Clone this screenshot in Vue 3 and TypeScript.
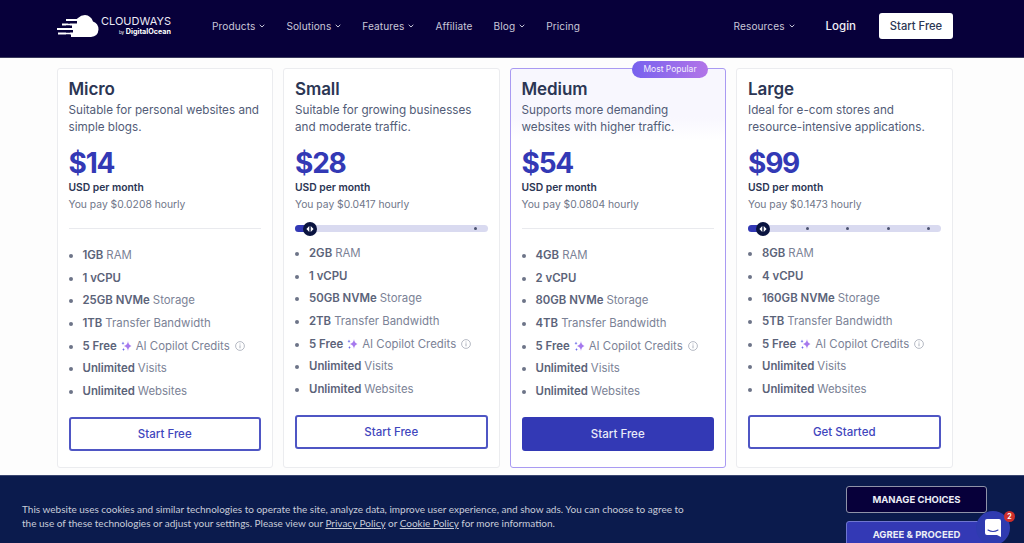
<script setup lang="ts">
interface Feature {
  bold: string
  text?: string
  copilot?: boolean
}

interface Plan {
  name: string
  desc: string[]
  price: string
  hourly: string
  cta: string
  featured?: boolean
  dots?: number[]
  features: Feature[]
}

function specs(ram: string, cpu: string, disk: string, bw: string): Feature[] {
  return [
    { bold: ram, text: 'RAM' },
    { bold: cpu },
    { bold: disk + ' NVMe', text: 'Storage' },
    { bold: bw, text: 'Transfer Bandwidth' },
    { bold: '5 Free', text: 'AI Copilot Credits', copilot: true },
    { bold: 'Unlimited', text: 'Visits' },
    { bold: 'Unlimited', text: 'Websites' }
  ]
}

const plans: Plan[] = [
  {
    name: 'Micro',
    desc: ['Suitable for personal websites and', 'simple blogs.'],
    price: '$14',
    hourly: 'You pay $0.0208 hourly',
    cta: 'Start Free',
    features: specs('1GB', '1 vCPU', '25GB', '1TB')
  },
  {
    name: 'Small',
    desc: ['Suitable for growing businesses', 'and moderate traffic.'],
    price: '$28',
    hourly: 'You pay $0.0417 hourly',
    cta: 'Start Free',
    dots: [93],
    features: specs('2GB', '1 vCPU', '50GB', '2TB')
  },
  {
    name: 'Medium',
    desc: ['Supports more demanding', 'websites with higher traffic.'],
    price: '$54',
    hourly: 'You pay $0.0804 hourly',
    cta: 'Start Free',
    featured: true,
    features: specs('4GB', '2 vCPU', '80GB', '4TB')
  },
  {
    name: 'Large',
    desc: ['Ideal for e-com stores and', 'resource-intensive applications.'],
    price: '$99',
    hourly: 'You pay $0.1473 hourly',
    cta: 'Get Started',
    dots: [30, 51, 72, 93],
    features: specs('8GB', '4 vCPU', '160GB', '5TB')
  }
]

const navLeft = [
  { label: 'Products', menu: true },
  { label: 'Solutions', menu: true },
  { label: 'Features', menu: true },
  { label: 'Affiliate', menu: false },
  { label: 'Blog', menu: true },
  { label: 'Pricing', menu: false }
]
</script>

<template>
  <div class="page">
    <header class="topbar">
      <div class="logo">
        <svg class="logo-mark" width="42" height="22" viewBox="0 0 42 22">
          <path fill="#fff" d="M14 22 Q12 21 13 19 L13 6 Q19 5 21 3 Q24 0 28 0 Q34 .5 36 6.500 Q41.500 8.500 41.500 14.500 Q41 21.500 34 22 Z" />
          <path fill="#fff" d="M9 4h11v2H9zM5 8.500h14v2H5zM0 13h14v2H0zM1 17.500h15v2H1z" />
          <path fill="#07003a" d="M11 6h9v2.500h-9zM9 10.500h6V13H9zM9 15h7v2.500H9zM9 19.500h5V22H9z" />
        </svg>
        <div class="logo-text">
          <span class="logo-name">CLOUDWAYS</span>
          <span class="logo-by"><small>by</small> DigitalOcean</span>
        </div>
      </div>
      <nav class="nav">
        <a v-for="item in navLeft" :key="item.label" class="nav-link">
          {{ item.label }}
          <svg v-if="item.menu" width="6" height="4" viewBox="0 0 6 4"><path d="M.7.8 3 3 5.300.8" fill="none" stroke="currentColor" stroke-width="1" /></svg>
        </a>
      </nav>
      <div class="top-right">
        <a class="nav-link">
          Resources
          <svg width="6" height="4" viewBox="0 0 6 4"><path d="M.7.8 3 3 5.300.8" fill="none" stroke="currentColor" stroke-width="1" /></svg>
        </a>
        <a class="login">Login</a>
        <a class="top-cta">Start Free</a>
      </div>
    </header>

    <main class="plans">
      <section v-for="plan in plans" :key="plan.name" class="card" :class="{ featured: plan.featured }">
        <span v-if="plan.featured" class="badge">Most Popular</span>
        <h2 class="plan-name">{{ plan.name }}</h2>
        <p class="plan-desc">
          <span v-for="line in plan.desc" :key="line">{{ line }}</span>
        </p>
        <div class="price">{{ plan.price }}</div>
        <div class="per">USD per month</div>
        <div class="hourly">{{ plan.hourly }}</div>

        <div v-if="plan.dots" class="slider">
          <span class="slider-fill"></span>
          <span class="slider-thumb">
            <svg width="8" height="6" viewBox="0 0 8 6"><path fill="#fff" d="M3.300 0v6L.4 3zM4.700 0v6l2.900-3z" /></svg>
          </span>
          <i v-for="d in plan.dots" :key="d" class="slider-dot" :style="{ left: d + '%' }"></i>
        </div>
        <hr v-else class="divider" />

        <ul class="features">
          <li v-for="f in plan.features" :key="f.bold + f.text">
            <b>{{ f.bold }}</b>
            <svg v-if="f.copilot" class="spark" width="11" height="12" viewBox="0 0 11 12">
              <path fill="#a679ee" d="M7 1 Q7.300 5 10.500 6 Q7.300 7 7 11 Q6.700 7 3 6 Q6.700 5 7 1Z" />
              <path fill="#6d6ee8" d="M2 1.500 Q2.200 3 3.500 3.300 Q2.200 3.600 2 5 Q1.800 3.600.5 3.300 Q1.800 3 2 1.500ZM2.500 8 Q2.700 9.300 3.800 9.500 Q2.700 9.800 2.500 11 Q2.300 9.800 1.200 9.500 Q2.300 9.300 2.500 8Z" />
            </svg>
            <span v-if="f.text">{{ f.text }}</span>
            <svg v-if="f.copilot" class="info" width="10" height="10" viewBox="0 0 10 10">
              <circle cx="5" cy="5" r="4.400" fill="none" stroke="#a3a8b5" stroke-width=".8" />
              <path d="M5 4.300v3M5 2.500v1" stroke="#a3a8b5" stroke-width=".9" />
            </svg>
          </li>
        </ul>

        <button class="cta" type="button">{{ plan.cta }}</button>
      </section>
    </main>

    <footer class="cookies">
      <p class="cookie-text">
        <span>This website uses cookies and similar technologies to operate the site, analyze data, improve user experience, and show ads. You can choose to agree to</span>
        <span>the use of these technologies or adjust your settings. Please view our <u>Privacy Policy</u> or <u>Cookie Policy</u> for more information.</span>
      </p>
      <div class="cookie-actions">
        <button class="manage" type="button">MANAGE CHOICES</button>
        <button class="agree" type="button">AGREE &amp; PROCEED</button>
      </div>
    </footer>

    <div class="chat">
      <svg width="16" height="18" viewBox="0 0 16 18">
        <path fill="#fff" d="M2 0h12a2 2 0 0 1 2 2v16l-4-2H2a2 2 0 0 1-2-2V2a2 2 0 0 1 2-2Z" />
        <path d="M3 11q5 3 10 0" fill="none" stroke="#2f3bb0" stroke-width="1.100" stroke-linecap="round" />
      </svg>
      <span class="chat-count">2</span>
    </div>
  </div>
</template>

<style scoped>
.page {
  position: relative;
  width: 1024px;
  height: 543px;
  overflow: hidden;
  background: #fdfdfd;
  font-family: Inter, "Noto Sans", sans-serif;
  color: #2b3654;
}

.topbar {
  display: flex;
  align-items: center;
  height: 58px;
  padding: 0 71px 5px 57px;
  box-sizing: border-box;
  border-bottom: 1px solid #3a3a5c;
  background: #07003a;
}

.logo {
  display: flex;
  align-items: center;
  gap: 2px;
  width: 155px;
  color: #fff;
}

.logo-text {
  display: flex;
  flex-direction: column;
  align-items: flex-end;
}

.logo-name {
  font-size: 11px;
  line-height: 12px;
  color: #eceaf5;
}

.logo-by {
  font-size: 7.200px;
  line-height: 9px;
  font-weight: 700;
}

.logo-by small {
  font-size: 4.500px;
  font-weight: 400;
}

.nav {
  display: flex;
  gap: 21px;
}

.nav-link {
  display: flex;
  align-items: center;
  gap: 4px;
  font-size: 10.100px;
  letter-spacing: .1px;
  color: #c9c7d8;
}

.top-right {
  display: flex;
  align-items: center;
  margin-left: auto;
}

.login {
  margin-left: 31px;
  font-size: 11.500px;
  font-weight: 500;
  color: #f1f0f7;
}

.top-cta {
  display: flex;
  align-items: center;
  justify-content: center;
  width: 74px;
  height: 26px;
  margin-left: 23px;
  border-radius: 3px;
  background: #fff;
  font-size: 11.200px;
  font-weight: 500;
  color: #2b3654;
}

.plans {
  display: grid;
  grid-template-columns: repeat(4, 1fr);
  gap: 10px;
  height: 417px;
  padding: 10px 71.500px 7px 56.500px;
  box-sizing: border-box;
}

.card {
  position: relative;
  display: flex;
  flex-direction: column;
  padding: 11px 11px 12px;
  border: 1px solid #ebecef;
  border-radius: 3px;
  background: #fff;
}

.card.featured {
  border-color: #a99af2;
  background: linear-gradient(#f8f7fe 0, #f8f7fe 48px, #fff 72px);
}

.badge {
  position: absolute;
  top: -8px;
  right: 17px;
  width: 76px;
  height: 17px;
  border-radius: 9px;
  background: linear-gradient(90deg, #7762ee, #b275e8);
  font-size: 8.500px;
  line-height: 17px;
  text-align: center;
  color: #f3effd;
}

.plan-name {
  margin: 0;
  font-size: 17px;
  line-height: 18px;
  font-weight: 600;
  letter-spacing: -.1px;
  color: #2b3654;
}

.plan-desc {
  display: flex;
  flex-direction: column;
  margin: 4px 0 0;
  font-size: 11.700px;
  line-height: 17px;
  white-space: nowrap;
  color: #525c77;
}

.price {
  margin-top: 11px;
  font-size: 28px;
  line-height: 32px;
  font-weight: 700;
  letter-spacing: -1.200px;
  color: #3339b5;
}

.per {
  font-size: 10.300px;
  line-height: 16px;
  font-weight: 600;
  color: #2b3654;
}

.hourly {
  margin-top: 1px;
  font-size: 10.300px;
  line-height: 16px;
  color: #6f7689;
}

.divider {
  width: 100%;
  height: 1px;
  margin: 16px 0 17px;
  border: 0;
  background: #e9eaee;
}

.slider {
  position: relative;
  height: 7px;
  margin: 13px 0 12px;
  border-radius: 4px;
  background: #d9daf0;
}

.slider-fill {
  position: absolute;
  top: 0;
  left: 0;
  width: 14px;
  height: 7px;
  border-radius: 4px;
  background: #3339b5;
}

.slider-thumb {
  position: absolute;
  top: -3.500px;
  left: 8px;
  display: flex;
  align-items: center;
  justify-content: center;
  width: 14px;
  height: 14px;
  border-radius: 50%;
  background: #0a1440;
}

.slider-dot {
  position: absolute;
  top: 2px;
  width: 3px;
  height: 3px;
  border-radius: 50%;
  background: #4b5270;
}

.features {
  display: flex;
  flex-direction: column;
  gap: 4.670px;
  margin: 0;
  padding: 0 0 0 14px;
  list-style: disc;
  font-size: 11.400px;
  line-height: 18px;
  color: #7b8296;
}

.features li::marker {
  color: #6d7488;
}

.features li {
  white-space: nowrap;
}

.features b {
  font-weight: 600;
  color: #5b6379;
}

.spark {
  margin: 0 4px 0 4px;
  vertical-align: -2px;
}

.info {
  margin-left: 5px;
  vertical-align: -1px;
}

.features b + span {
  margin-left: 3px;
}

.cta {
  height: 34px;
  margin-top: 17px;
  border: 2px solid #4f56c4;
  border-radius: 3px;
  background: #fff;
  font-family: inherit;
  font-size: 11.500px;
  font-weight: 500;
  color: #3f46bd;
}

.featured .cta {
  border-color: #3339b5;
  background: #3339b5;
  color: #e9eaf8;
}

.cookies {
  display: flex;
  justify-content: space-between;
  height: 68px;
  padding: 10px 37px 0 22px;
  box-sizing: border-box;
  border-top: 1px solid #3a4670;
  background: #0b1b4d;
  overflow: hidden;
}

.cookie-text {
  display: flex;
  flex-direction: column;
  margin: 16px 0 0;
  font-family: Lato, sans-serif;
  font-size: 10px;
  line-height: 14px;
  white-space: nowrap;
  color: #c8ccd9;
}

.cookie-actions {
  display: flex;
  flex-direction: column;
  gap: 8px;
}

.manage,
.agree {
  flex: none;
  width: 141px;
  height: 27px;
  border-radius: 3px;
  font-family: inherit;
  font-size: 9.500px;
  font-weight: 700;
  color: #eceef6;
}

.manage {
  border: 1px solid #8f93a8;
  background: #07003a;
}

.agree {
  border: 1px solid #6f76d0;
  background: #3339b5;
}

.chat {
  position: absolute;
  right: 14px;
  bottom: -2px;
  display: flex;
  align-items: center;
  justify-content: center;
  width: 34px;
  height: 34px;
  border-radius: 50%;
  background: #2f3bb0;
}

.chat-count {
  position: absolute;
  top: 0;
  right: -5px;
  width: 11px;
  height: 11px;
  border-radius: 50%;
  background: #cf2f2b;
  font-size: 7px;
  font-weight: 700;
  line-height: 11px;
  text-align: center;
  color: #fff;
}
</style>

<style>
html,
body {
  margin: 0;
  background: #fdfdfd;
}
</style>
